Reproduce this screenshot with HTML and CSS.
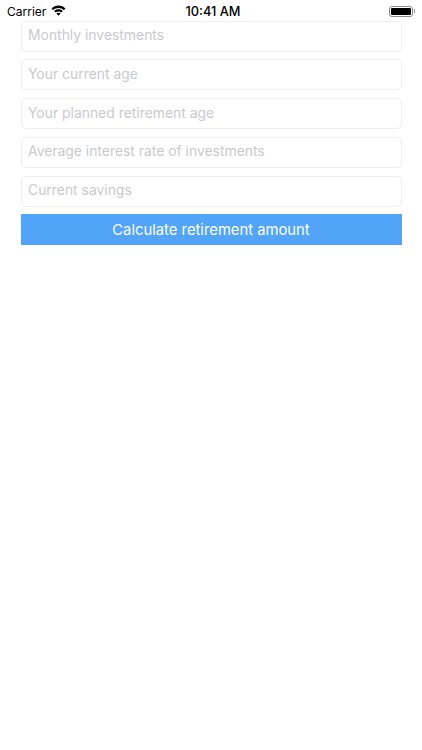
FILE: index.html
```html
<!DOCTYPE html>
<html>
<head>
  <title>Retirement calculator</title>
  <link rel="stylesheet" href="styles.css">
</head>
<body>
  <div class="statusbar">
    <div class="status-left">
      <span class="carrier">Carrier</span>
      <svg class="wifi" width="15" height="11" viewBox="0 0 16 12">
        <path d="M8 .6C5.1.6 2.4 1.8.4 3.7l1.8 1.9C3.7 4.1 5.8 3.3 8 3.3s4.3.8 5.8 2.3l1.8-1.9C13.6 1.8 10.9.6 8 .6z"/>
        <path d="M8 4.7c-1.8 0-3.5.7-4.7 1.9l1.6 1.7C5.7 7.5 6.8 7 8 7s2.3.5 3.1 1.3l1.6-1.7C11.5 5.4 9.8 4.7 8 4.7z"/>
        <path d="M8 8.4c-.9 0-1.7.4-2.3 1L8 11.8l2.3-2.4c-.6-.6-1.4-1-2.3-1z"/>
      </svg>
    </div>
    <span class="time">10:41 AM</span>
    <div class="status-right">
      <div class="battery"><div class="battery-level"></div></div>
      <div class="battery-cap"></div>
    </div>
  </div>

  <form class="form">
    <input class="field" placeholder="Monthly investments">
    <input class="field" placeholder="Your current age">
    <input class="field" placeholder="Your planned retirement age">
    <input class="field" placeholder="Average interest rate of investments">
    <input class="field" placeholder="Current savings">
    <button class="submit" type="button">Calculate retirement amount</button>
  </form>
</body>
</html>
```
FILE: styles.css
```css
body {
  margin: 0;
  background-color: #fff;
  color: #000;
  font-family: Inter, "Liberation Sans", sans-serif;
  height: 750px;
  overflow: hidden;
}

.statusbar {
  display: grid;
  grid-template-columns: 1fr auto 1fr;
  align-items: center;
  box-sizing: border-box;
  height: 21px;
  margin-bottom: -0.5px;
  padding: 1px 3px 0 7px;
  font-size: 12px;
}

.status-left {
  display: flex;
  align-items: center;
  gap: 5px;
}

.wifi {
  margin-top: -2px;
}

.time {
  font-weight: 500;
  font-size: 12.8px;
}

.status-right {
  display: flex;
  align-items: center;
  justify-content: flex-end;
  gap: 1px;
  margin-right: 4px;
}

.battery {
  width: 24px;
  height: 11px;
  box-sizing: border-box;
  border: 1px solid #8a8a8a;
  border-radius: 3px;
  padding: 1px;
}

.battery-level {
  height: 100%;
  background-color: #000;
  border-radius: 1px;
}

.battery-cap {
  width: 1px;
  height: 4px;
  background-color: #999;
}

.form {
  display: flex;
  flex-direction: column;
  gap: 7.75px;
  padding: 0 20.5px;
}

.field {
  box-sizing: border-box;
  height: 31px;
  width: 100%;
  margin: 0;
  padding: 0 7px 2px 6.5px;
  border: 1px solid #efefef;
  border-radius: 5px;
  background-color: #fff;
  font-family: inherit;
  font-size: 13.9px;
  outline: none;
}

.field::placeholder {
  color: #cacace;
  opacity: 1;
}

.submit {
  height: 31px;
  margin: 0;
  padding: 0;
  border: 0;
  background-color: #51a4f7;
  color: #fff;
  font-family: inherit;
  font-size: 14.8px;
}
```
